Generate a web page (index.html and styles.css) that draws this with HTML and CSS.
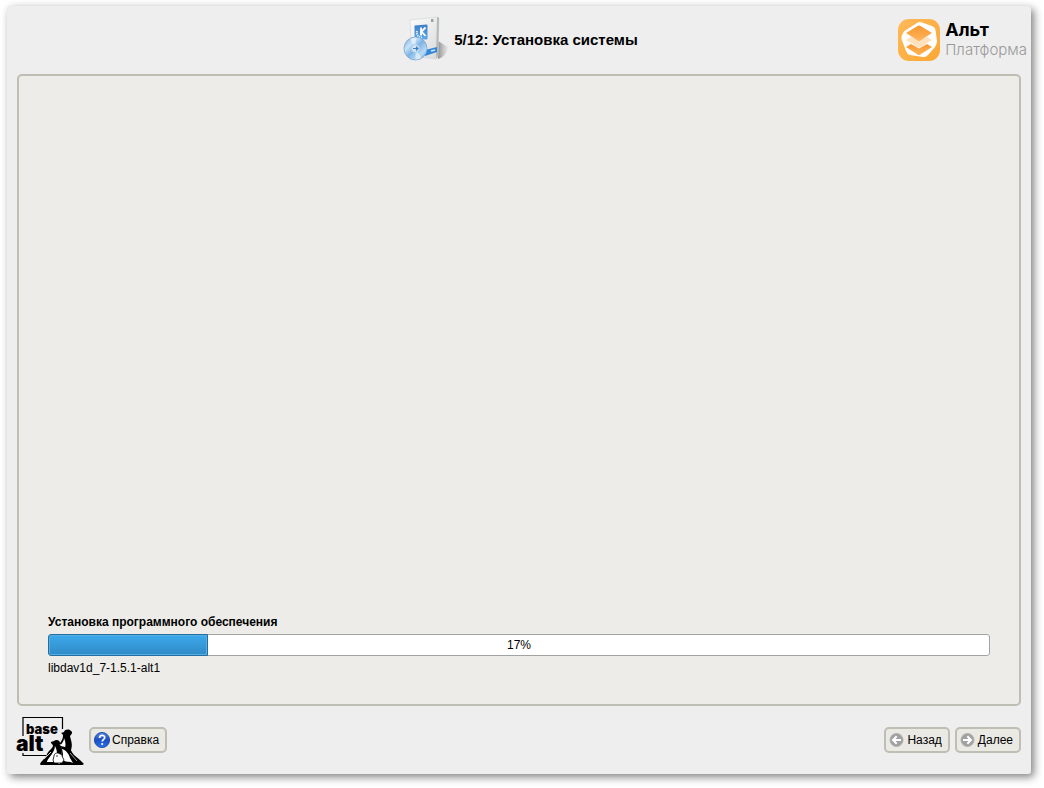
FILE: index.html
```html
<!DOCTYPE html>
<html lang="ru">
<head>
    <meta charset="UTF-8">
    <meta name="viewport" content="width=device-width, initial-scale=1.0">
    <title>Установка системы</title>
    <link rel="stylesheet" href="styles.css">
</head>
<body>

    <div class="window">
        <header class="header">
            <div class="step">
                <svg class="step-icon" viewBox="-3 0 48 48" aria-hidden="true">
                    <defs>
                        <linearGradient id="box" x1="0" y1="0" x2="1" y2="1">
                            <stop offset="0" stop-color="#fdfdfd"/>
                            <stop offset="1" stop-color="#d8d9da"/>
                        </linearGradient>
                        <linearGradient id="blue" x1="0" y1="0" x2="0" y2="1">
                            <stop offset="0" stop-color="#3f7fc6"/>
                            <stop offset="1" stop-color="#5ca8ea"/>
                        </linearGradient>
                        <linearGradient id="disc" x1="0" y1="0" x2="1" y2="1">
                            <stop offset="0" stop-color="#6fa3d8"/>
                            <stop offset="0.3" stop-color="#c6e2f8"/>
                            <stop offset="0.5" stop-color="#80b3e2"/>
                            <stop offset="0.75" stop-color="#b9dcf6"/>
                            <stop offset="1" stop-color="#5f94cb"/>
                        </linearGradient>
                        <linearGradient id="shade" x1="0" y1="0" x2="1" y2="0">
                            <stop offset="0" stop-color="#666" stop-opacity="0.7"/>
                            <stop offset="1" stop-color="#999" stop-opacity="0.1"/>
                        </linearGradient>
                    </defs>
                    <path d="M35 25l10 6c-1 6-4 10-10 12z" fill="url(#shade)"/>
                    <path d="M7 4l27-3 2 1-1 38-2 3-24-3z" fill="url(#box)" stroke="#cfd1d3" stroke-width="0.600"/>
                    <path d="M34 1l2 1-1 38-2 3z" fill="#b5b7b9"/>
                    <rect x="28" y="3" width="2.500" height="3" rx="0.500" fill="#9a9da1"/>
                    <path d="M11.500 9.500l12-1q1 0 1 1v13q0 1-1 1l-11-.5q-1 0-1-1z" fill="url(#blue)"/>
                    <path d="M18 11.500v8M22.500 11.500l-4 4 4 4.500" fill="none" stroke="#fff" stroke-width="1.800"/>
                    <path d="M14 15c-1 4 2 7 6 6.500" fill="none" stroke="#e3f0fb" stroke-width="1.800" stroke-dasharray="1.300 0.800"/>
                    <path d="M22 34l12-3v5l-12 4z" fill="#3286dc"/>
                    <path d="M28 35l4-1" stroke="#d5e9fa" stroke-width="1.500"/>
                    <circle cx="12.500" cy="32.500" r="11.500" fill="url(#disc)" stroke="#7ba4ce" stroke-width="0.800"/>
                    <path d="M12.500 32.500L7 23a11 11 0 0 1 6-1.500zM12.500 32.500l6 9.500a11 11 0 0 1-6 1.500z" fill="#fff" opacity="0.500"/>
                    <circle cx="12.500" cy="32.500" r="4" fill="#d6e9f8" stroke="#a6c9ea"/>
                    <path d="M10 32.500h4.500M13 30.500l2 2-2 2" fill="none" stroke="#3f7fbf" stroke-width="1.200"/>
                </svg>
                <h1 class="step-title">5/12: Установка системы</h1>
            </div>
            <div class="brand">
                <svg class="brand-icon" viewBox="0 0 42 42" aria-hidden="true">
                    <defs>
                        <linearGradient id="tile" x1="0" y1="0" x2="1" y2="1">
                            <stop offset="0" stop-color="#ffb95a"/>
                            <stop offset="1" stop-color="#fba833"/>
                        </linearGradient>
                        <linearGradient id="layer" x1="0" y1="0" x2="0" y2="1">
                            <stop offset="0" stop-color="#f7972f"/>
                            <stop offset="1" stop-color="#ffb55c"/>
                        </linearGradient>
                    </defs>
                    <rect width="42" height="42" rx="11" fill="url(#tile)"/>
                    <path d="M19 4Q21 2.500 24 3.500L34 7Q37 8 37.500 11L39 22Q39 25 37 28L30 36Q28 38.500 25 38L12 36Q9 35 8 32L3.500 20Q3 17 5 14Q6 12 8 11Z" fill="#fff"/>
                    <path d="M8 28l5-3 8 4.500 8-4.500 5 3-11.500 7.500q-1.500 1-3 0z" fill="url(#layer)"/>
                    <path d="M8 21l5-3 8 4 8-4 5 3-11.500 7q-1.500 1-3 0z" fill="#ffe2bd"/>
                    <path d="M8 14l11.500-7q1.500-1 3 0L34 14l-11.500 7.500q-1.500 1-3 0z" fill="url(#layer)"/>
                </svg>
                <div class="brand-text">
                    <span class="brand-name">Альт</span>
                    <span class="brand-product">Платформа</span>
                </div>
            </div>
        </header>

        <main class="panel">
            <label class="progress-title" for="progress">Установка программного обеспечения</label>
            <div class="progress-box">
                <progress class="progress" id="progress" value="17" max="100"></progress>
                <span class="progress-value">17%</span>
            </div>
            <p class="package">libdav1d_7-1.5.1-alt1</p>
        </main>

        <footer class="footer">
            <svg class="basealt" viewBox="0 0 68 51" role="img" aria-label="basealt">
                <path d="M7 21V2.500h39.500V14M7 38v2.500h23" fill="none" stroke="#000" stroke-width="1.200"/>
                <text class="basealt-small" x="10" y="19">base</text>
                <text class="basealt-big" x="0" y="36">alt</text>
                <!-- back penguin -->
                <path d="M45 18l3-1c1-3 5-3 7-1 2 1 1 3-1 5 1 5 3 8 1 14l3 9-14-2-6-8c4-4 9-8 9-13 0-2-1-2-2-3z" fill="#000"/>
                <path d="M48 23c0 4-3 6-5 9l1 3 4 1c2-4 2-9 0-13z" fill="#fff"/>
                <!-- left penguin -->
                <path d="M35 27l3-1c2-2 6-1 6 2 2 5 3 9 1 14l-3 7H24c2-4 6-6 7-10 2-4 5-5 6-8 0-1-1-2-2-3z" fill="#000"/>
                <path d="M39 31c0 4-3 8-6 12-1 1-2 3-2 4h7c4-4 4-10 1-16z" fill="#fff"/>
                <path d="M35 37l-7 7M44 29c2 3 3 6 2 10" fill="none" stroke="#fff" stroke-width="0.800"/>
                <!-- right penguin -->
                <path d="M45 31l4 1c5 2 6 4 9 8l6 5 4 4-10 1-14-1 2-8z" fill="#000"/>
                <path d="M46 34c4 1 7 5 8 9l3 5-6-1-5-2 1-6z" fill="#fff"/>
                <path d="M54 38l7 8" stroke="#fff" stroke-width="0.600"/>
                <!-- chick -->
                <path d="M38 41c0-3 4-4 6-2 2 0 2 1 2 2l2 4-2 3h-8l-1-3z" fill="#fff" stroke="#000" stroke-width="0.800"/>
                <circle cx="41" cy="41" r="0.700"/>
                <path d="M24 50c1-3 5-3 9-2 2-1 4-1 6 0 3 1 5 1 8 0 3-2 7-1 10 0 4-1 7-1 11 2z" fill="#000"/>
            </svg>
            <button class="btn" type="button">
                <svg class="btn-icon" viewBox="0 0 16 16" aria-hidden="true">
                    <defs>
                        <linearGradient id="help" x1="0" y1="0" x2="0" y2="1">
                            <stop offset="0" stop-color="#5585dc"/>
                            <stop offset="0.500" stop-color="#1c4fc4"/>
                            <stop offset="1" stop-color="#2874ed"/>
                        </linearGradient>
                    </defs>
                    <circle cx="8" cy="8" r="7.600" fill="url(#help)" stroke="#123a9d" stroke-width="0.800"/>
                    <path d="M5.500 6c0-3.400 5.200-3.400 5.200-.4 0 2-2.500 2-2.500 4" fill="none" stroke="#fff" stroke-width="1.700"/>
                    <circle cx="8.200" cy="12" r="1.100" fill="#fff"/>
                </svg>
                Справка
            </button>
            <div class="nav">
                <button class="btn" type="button">
                    <svg class="btn-icon" viewBox="0 0 16 16" aria-hidden="true">
                        <circle cx="7.500" cy="8" r="6.500" fill="#a0a0a0" stroke="#b0b0b0"/>
                        <path d="M12 8H5M7.700 4.300L4 8l3.700 3.700" fill="none" stroke="#fff" stroke-width="2"/>
                    </svg>
                    Назад
                </button>
                <button class="btn" type="button">
                    <svg class="btn-icon" viewBox="0 0 16 16" aria-hidden="true">
                        <circle cx="7.500" cy="8" r="6.500" fill="#a0a0a0" stroke="#b0b0b0"/>
                        <path d="M3 8h7M7.300 4.300L11 8l-3.700 3.700" fill="none" stroke="#fff" stroke-width="2"/>
                    </svg>
                    Далее
                </button>
            </div>
        </footer>
    </div>

</body>
</html>
```
FILE: styles.css
```css
* {
    margin: 0;
    padding: 0;
    box-sizing: border-box;
}

body {
    background: #fff;
    color: #000;
    font-family: "Liberation Sans", Arial, sans-serif;
    font-size: 12px;
    line-height: 16px;
    display: flex;
    min-height: 100vh;
    padding: 6px 13px 14px 7px;
}

.window {
    flex: 1;
    display: flex;
    flex-direction: column;
    background: #eee;
    border-radius: 3px;
    box-shadow: 3px 3px 8px rgba(0, 0, 0, 0.5);
}

.header {
    display: grid;
    grid-template-columns: 1fr auto 1fr;
    align-items: center;
    height: 68px;
    padding: 0 4px;
}

.step {
    grid-column: 2;
    display: flex;
    align-items: center;
    gap: 6px;
}

.step-icon {
    width: 48px;
    height: 48px;
}

.step-title {
    font-size: 15px;
    line-height: 20px;
    font-weight: bold;
}

.brand {
    justify-self: end;
    display: flex;
    align-items: center;
    gap: 5px;
}

.brand-icon {
    width: 42px;
    height: 42px;
}

.brand-text {
    display: flex;
    flex-direction: column;
    font-family: Inter, sans-serif;
    line-height: 20px;
}

.brand-name {
    font-size: 18px;
    font-weight: 700;
}

.brand-product {
    font-size: 15px;
    font-weight: 300;
    color: #999;
}

.panel {
    flex: 1;
    display: flex;
    flex-direction: column;
    justify-content: flex-end;
    gap: 4px;
    margin: 0 10px;
    padding: 28px 29px;
    background: #edece8;
    border: 2px solid #bfbeb3;
    border-radius: 5px;
}

.progress-title {
    font-weight: bold;
}

.progress-box {
    position: relative;
    height: 22px;
}

.progress {
    display: block;
    width: 100%;
    height: 22px;
    appearance: none;
    border: none;
    border-radius: 3px;
    overflow: hidden;
}

.progress::-webkit-progress-bar {
    background: #fff;
    border-radius: 3px;
    box-shadow: inset 0 0 0 1px #a3a3a3;
}

.progress::-webkit-progress-value {
    background: linear-gradient(#3da9ec, #308bc6);
    border: 1px solid #236d9f;
    border-radius: 3px 0 0 3px;
    box-shadow: inset 0 0 0 1px #55aee6;
}

/* percent label over the bar */
.progress-value {
    position: absolute;
    inset: 0;
    line-height: 22px;
    text-align: center;
}

.footer {
    display: flex;
    align-items: center;
    height: 68px;
    padding: 0 10px 0 9px;
}

.basealt {
    width: 68px;
    height: 51px;
    margin-right: 5px;
}

.basealt-small,
.basealt-big {
    font-family: Inter, sans-serif;
    font-weight: 900;
}

.basealt-small {
    font-size: 13px;
}

.basealt-big {
    font-size: 21px;
}

.btn {
    display: flex;
    align-items: center;
    gap: 2px;
    height: 26px;
    padding: 0 6px 0 3px;
    background: #eae9e4;
    border: 2px solid #bfbeb3;
    border-radius: 5px;
    color: #000;
    font-family: inherit;
    font-size: 12px;
}

.btn-icon {
    width: 16px;
    height: 16px;
}

.nav {
    display: flex;
    gap: 5px;
    margin-left: auto;
}
```
